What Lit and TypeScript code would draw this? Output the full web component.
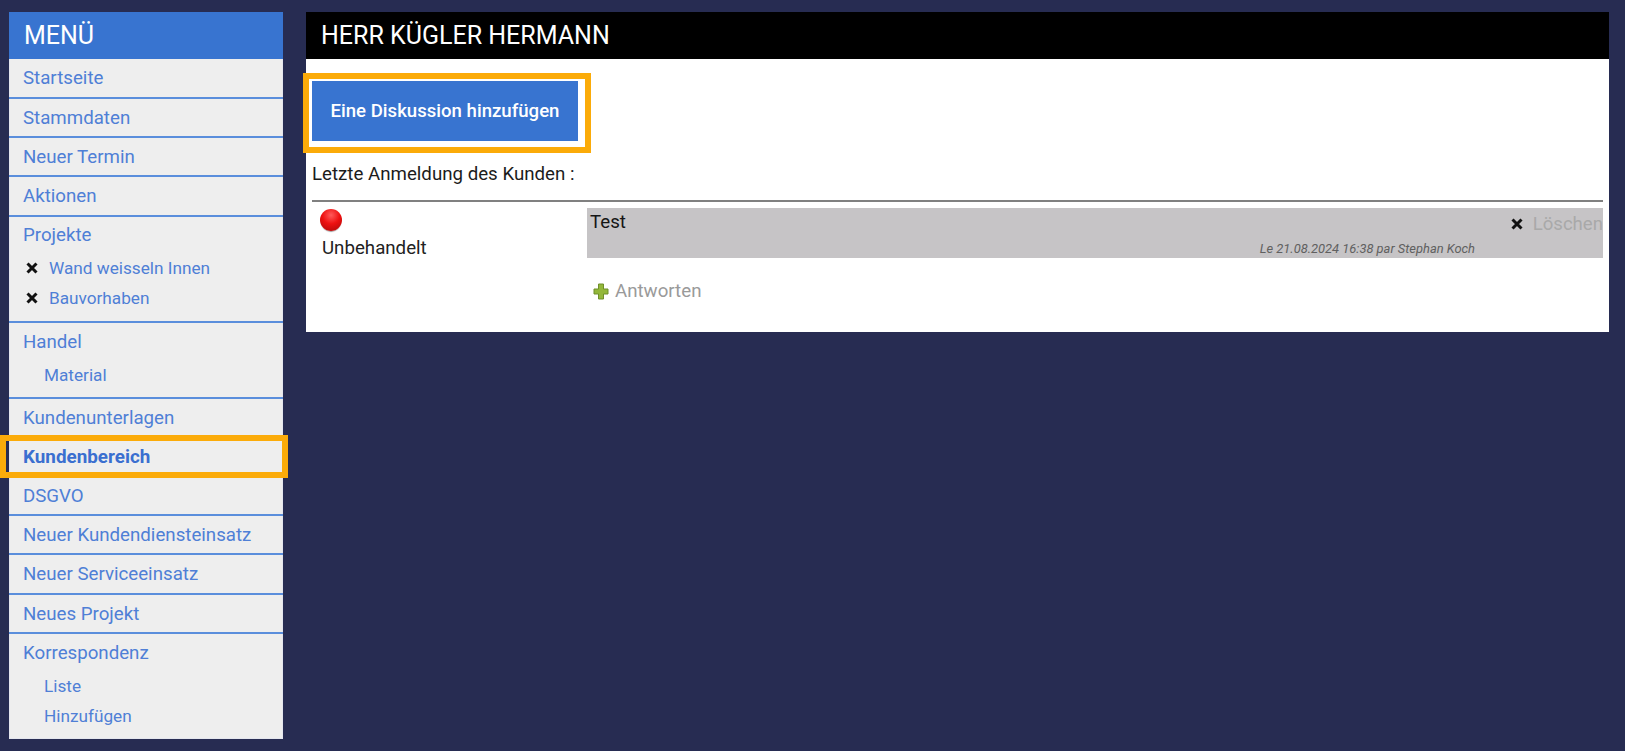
import { LitElement, html, css } from "lit";
import { customElement } from "lit/decorators.js";

const x = html`<svg class="x" viewBox="0 0 14 14" width="14" height="14"><path d="M2.500 2.500 11.500 11.500M11.500 2.500 2.500 11.500" stroke="#111" stroke-width="3" fill="none"/></svg>`;

@customElement("app-root")
export class AppRoot extends LitElement {
  static styles = css`
    :host { display: block; width: 1625px; height: 751px; background: #272c52; font-family: Roboto, "Liberation Sans", sans-serif; overflow: hidden; position: relative; box-sizing: border-box; }
    .page { display: flex; align-items: flex-start; gap: 23px; padding: 12px 16px 0 9px; }
    aside { width: 274px; height: 727px; background: #eeeeee; flex: none; box-shadow: inset 0 0 0 1px #e4e6ee; }
    .mh { height: 47px; box-sizing: border-box; background: #3874d0; color: #fff; font-size: 25px; line-height: 48px; padding-left: 15px; }
    .row { box-sizing: border-box; height: 39.2px; border-bottom: 2px solid #5a8edc; padding: 0 14px; font-size: 18.7px; line-height: 38px; color: #4f7fd6; white-space: nowrap; }
    .row.first { height: 40px; }
    .row.noline { border-bottom: none; }
    .row.active { font-weight: 700; color: #3a6fd0; font-size: 18.85px; }
    .group { box-sizing: border-box; border-bottom: 2px solid #5a8edc; }
    .group .row { border-bottom: none; }
    .group .row.tight { line-height: 36px; }
    .sub { display: flex; align-items: center; height: 30px; font-size: 17.200px; color: #4f7fd6; white-space: nowrap; }
    .sub.ind { padding-left: 35px; }
    .sub.del { padding-left: 16px; gap: 10px; }
    .g1 { height: 106px; } .g2 { height: 76px; }
    .subs1 { margin-top: -3px; } .subs2 { margin-top: -2px; }
    .tail { margin-top: -2px; }
    main { flex: 1; height: 320px; background: #fff; }
    .title { height: 47px; box-sizing: border-box; background: #000; color: #fff; font-size: 25px; line-height: 48px; padding-left: 15px; white-space: nowrap; }
    .body { padding: 22px 6px 0; }
    button { display: block; width: 266px; height: 60px; border: none; background: #3874d0; color: #fff; font: 500 18.6px Roboto, "Liberation Sans", sans-serif; padding: 0; }
    .last { font-size: 18.7px; color: #1c1c1c; margin-top: 23px; line-height: 20px; }
    hr { border: none; height: 2px; background: #808080; margin: 16px 0 0; }
    .disc { display: grid; grid-template-columns: 276px 1fr; margin-top: 6px; }
    .state { padding: 1px 0 0 8px; font-size: 18.7px; color: #222; }
    .ball { display: block; width: 22px; height: 22px; border-radius: 50%; background: radial-gradient(circle at 50% 28%, #ff5a5a 0, #ee1111 45%, #a80808 100%); box-shadow: 0 2px 1px -1px #999; }
    .state span { display: block; margin: 6px 0 0 2px; line-height: 22px; }
    .bubble { height: 50px; margin-left: -1px; background: #c6c4c6; position: relative; box-sizing: border-box; padding: 4px 3px; font-size: 18.7px; color: #151515; line-height: 20px; }
    .meta { position: absolute; right: 128px; bottom: 2px; font-size: 12.9px; font-style: italic; color: #606060; line-height: 14px; white-space: nowrap; }
    .drop { position: absolute; right: 0; top: 6px; display: flex; align-items: center; gap: 9px; font-size: 18.6px; color: #a9a9a9; line-height: 20px; }
    .reply { display: flex; align-items: center; gap: 6px; margin: 22px 0 0 5px; font-size: 18.7px; color: #9a9a9a; line-height: 22px; }
    .hl { position: absolute; border: 6px solid #fbab09; box-sizing: border-box; pointer-events: none; }
    .hl.a { left: 303px; top: 73px; width: 288px; height: 80px; }
    .hl.b { left: 0; top: 435px; width: 288px; height: 43px; }
  `;

  render() {
    return html`
      <div class="page">
        <aside>
          <div class="mh">MENÜ</div>
          <div class="row first">Startseite</div>
          <div class="row">Stammdaten</div>
          <div class="row">Neuer Termin</div>
          <div class="row">Aktionen</div>
          <div class="group g1">
            <div class="row tight">Projekte</div>
            <div class="subs1">
              <div class="sub del">${x}<span>Wand weisseln Innen</span></div>
              <div class="sub del">${x}<span>Bauvorhaben</span></div>
            </div>
          </div>
          <div class="group g2">
            <div class="row">Handel</div>
            <div class="subs2"><div class="sub ind">Material</div></div>
          </div>
          <div class="row noline">Kundenunterlagen</div>
          <div class="row noline active">Kundenbereich</div>
          <div class="row">DSGVO</div>
          <div class="row">Neuer Kundendiensteinsatz</div>
          <div class="row">Neuer Serviceeinsatz</div>
          <div class="row">Neues Projekt</div>
          <div class="row noline">Korrespondenz</div>
          <div class="tail">
            <div class="sub ind">Liste</div>
            <div class="sub ind">Hinzufügen</div>
          </div>
        </aside>
        <main>
          <div class="title">HERR KÜGLER HERMANN</div>
          <div class="body">
            <button>Eine Diskussion hinzufügen</button>
            <div class="last">Letzte Anmeldung des Kunden :</div>
            <hr />
            <div class="disc">
              <div class="state"><i class="ball"></i><span>Unbehandelt</span></div>
              <div>
                <div class="bubble">Test
                  <div class="meta">Le 21.08.2024 16:38 par Stephan Koch</div>
                  <div class="drop">${x}<span>Löschen</span></div>
                </div>
                <div class="reply">
                  <svg width="16" height="17" viewBox="0 0 16 17"><path d="M5.500 1h5v5H15v5h-4.500v5h-5v-5H1V6h4.500z" fill="#93b73a" stroke="#6f8f2a" stroke-width="1"/></svg>
                  <span>Antworten</span>
                </div>
              </div>
            </div>
          </div>
        </main>
      </div>
      <div class="hl a"></div>
      <div class="hl b"></div>
    `;
  }
}
